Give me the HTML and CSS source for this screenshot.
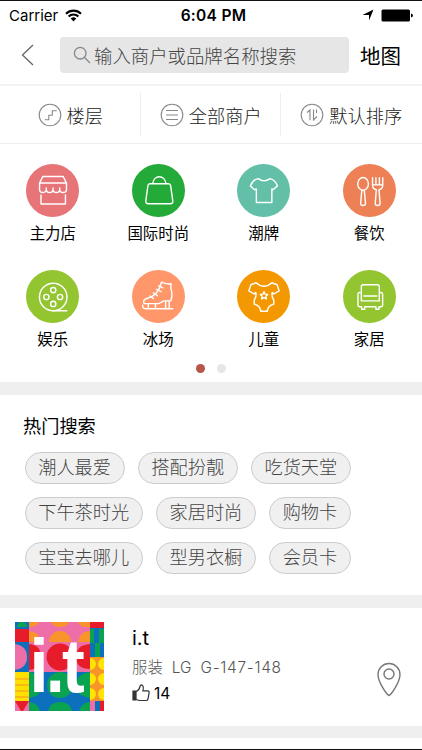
FILE: index.html
```html
<!DOCTYPE html>
<html lang="zh-CN">
<head>
    <meta charset="UTF-8">
    <meta name="viewport" content="width=device-width, initial-scale=1.0">
    <title>商户</title>
    <link rel="stylesheet" href="styles.css">
</head>
<body>
<div class="screen">

    <!-- 状态栏 -->
    <div class="status-bar">
        <div class="carrier">
            <span>Carrier</span>
            <svg width="17" height="13" viewBox="0 0 17 13" fill="none" stroke="#000" stroke-width="2.1">
                <path d="M1 4.7a10.6 10.6 0 0 1 15 0M3.6 7.5a7 7 0 0 1 9.8 0"/>
                <path d="M8.5 12.5L5.7 9.6a4 4 0 0 1 5.6 0z" fill="#000" stroke="none"/>
            </svg>
        </div>
        <strong class="clock">6:04 PM</strong>
        <div class="battery">
            <svg width="12" height="12" viewBox="0 0 12 12"><path d="M11.5 .5L7 11.5V6H.5z"/></svg>
            <svg width="33" height="13" viewBox="0 0 33 13">
                <rect x=".5" y=".5" width="28.5" height="12" rx="1.5"/>
                <path d="M30 4.5q2 .3 2 2t-2 2z"/>
            </svg>
        </div>
    </div>

    <!-- 搜索 -->
    <div class="header">
        <svg class="back" width="13" height="22" viewBox="0 0 13 22"><path d="M12 1L1.5 11L12 21"/></svg>
        <div class="search">
            <svg width="18" height="18" viewBox="0 0 18 18"><circle cx="7.2" cy="7.2" r="5.8"/><path d="M11.5 11.5L17 17"/></svg>
            <span>输入商户或品牌名称搜索</span>
        </div>
        <span class="map">地图</span>
    </div>

    <!-- 筛选 -->
    <div class="filters">
        <div class="filter">
            <svg width="24" height="24" viewBox="0 0 24 24"><circle cx="12" cy="12" r="10.8"/><path d="M6.8 16.8h4v-4.6h3.5V7.8h4.5"/></svg>
            <span>楼层</span>
        </div>
        <div class="filter">
            <svg width="24" height="24" viewBox="0 0 24 24"><circle cx="12" cy="12" r="10.8"/><path d="M6 7.5h12M6 12h12M6 16.5h12"/></svg>
            <span>全部商户</span>
        </div>
        <div class="filter">
            <svg width="24" height="24" viewBox="0 0 24 24"><circle cx="12" cy="12" r="10.8"/><path d="M7 9.5L10 7v10.3M13.5 6.5V17l3.5-3.5M16.5 6.5V10"/></svg>
            <span>默认排序</span>
        </div>
    </div>

    <!-- 分类 -->
    <div class="categories">
        <div class="category">
            <svg class="icon red" viewBox="0 0 52 52">
                <path d="M16.5 12.3h20l3.2 6.4H13.3zM13.3 18.7v6.2c0 4 6.6 4 6.6 0c0 4 6.6 4 6.6 0c0 4 6.6 4 6.6 0c0 4 6.6 4 6.6 0v-6.2M19.9 23.5v2M26.5 23.5v2M33.1 23.5v2M14.7 30.5v8.7h24v-8.7"/>
            </svg>
            <span>主力店</span>
        </div>
        <div class="category">
            <svg class="icon green" viewBox="0 0 52 52">
                <path d="M17.5 19.3h18.2q1.9 0 2.2 2L40 36q.4 3-2.4 3H16q-2.8 0-2.4-3l2-14.7q.3-2 1.9-2zM20.3 19.3c1-9 12-9 13 0"/>
            </svg>
            <span>国际时尚</span>
        </div>
        <div class="category">
            <svg class="icon teal" viewBox="0 0 52 52">
                <path d="M20.8 14.3q5.8 4.5 11.6 0c4 1 5.5 2.6 7.3 7.2l-4.4 3.7-1.1-.7v13.2H19V24.5l-1.8.7-4.1-3.7c1.8-4.6 3.8-6.4 7.7-7.2z"/>
            </svg>
            <span>潮牌</span>
        </div>
        <div class="category">
            <svg class="icon orange" viewBox="0 0 52 52">
                <ellipse cx="19.7" cy="19.5" rx="5.2" ry="6.3"/>
                <path d="M18.5 25.8l-1.2 12.7q0 2.3 2.4 2.3t2.4-2.3l-1.2-12.7M29 13.5v7.2q0 4 3.7 4.6l-1.1 13.2q0 2.3 2.4 2.3t2.4-2.3L35.3 25.3q3.7-.6 3.7-4.6v-7.2M32.3 13.5v7M35.7 13.5v7M29 20.5h10"/>
            </svg>
            <span>餐饮</span>
        </div>
        <div class="category">
            <svg class="icon lime" viewBox="0 0 52 52">
                <circle cx="26.7" cy="26.5" r="13.5"/>
                <circle cx="26.7" cy="19.7" r="2.6"/><circle cx="26.7" cy="33.3" r="2.6"/>
                <circle cx="20" cy="26.5" r="2.6"/><circle cx="33.4" cy="26.5" r="2.6"/>
                <path d="M26.7 40H40"/>
            </svg>
            <span>娱乐</span>
        </div>
        <div class="category">
            <svg class="icon salmon" viewBox="0 0 52 52">
                <path d="M29 12q4.5 2.2 9.3 1.5-1 4 .8 8.5.5 4-1 8.3h-6.6L26 33H12q-2-3.5 2.5-5Q25.5 25.5 29 12zM10.5 34.5q-.5 3.5 3 3.5H40M16 33v5M23 33v5M33 30.5V38M36.5 30.5V38"/>
                <path d="M26.2 15.5l4 2M24 19l4.5 2.3M21 22.5l4 2.8M17.5 25.5l3.5 2.5"/>
            </svg>
            <span>冰场</span>
        </div>
        <div class="category">
            <svg class="icon amber" viewBox="0 0 52 52">
                <path d="M18.8 12.5q7.7 7 15.4 0l5.2 2 2 6-5.2 3-1.6-1.5q-1 4 1.5 7.5v4q-6 1.5-6.3 7h-6.6q-.3-5.5-6.3-7v-4q2.5-3.5 1.5-7.5l-1.6 1.5-5.2-3 2-6z"/>
                <path d="M26.5 21.3l1.1 2.4 2.6.3-1.9 1.8.5 2.6-2.3-1.3-2.3 1.3.5-2.6-1.9-1.8 2.6-.3z"/>
            </svg>
            <span>儿童</span>
        </div>
        <div class="category">
            <svg class="icon lime" viewBox="0 0 52 52">
                <path d="M18 22.5v-6.2q0-1.8 1.8-1.8h14q1.8 0 1.8 1.8v14H18zM18 22.5q-3.3-1.2-3.3 1.5v10.7q0 1.3 1.3 1.3h2.3v2.5h3V36h11v2.5h3V36h2.3q1.3 0 1.3-1.3V24q0-2.7-3.3-1.5M20.5 25.5h12.6"/>
            </svg>
            <span>家居</span>
        </div>
    </div>
    <div class="dots">
        <span class="dot active"></span>
        <span class="dot"></span>
    </div>

    <!-- 热门搜索 -->
    <div class="hot">
        <h2>热门搜索</h2>
        <div class="tags">
            <span class="tag">潮人最爱</span>
            <span class="tag">搭配扮靓</span>
            <span class="tag">吃货天堂</span>
        </div>
        <div class="tags">
            <span class="tag">下午茶时光</span>
            <span class="tag">家居时尚</span>
            <span class="tag">购物卡</span>
        </div>
        <div class="tags">
            <span class="tag">宝宝去哪儿</span>
            <span class="tag">型男衣橱</span>
            <span class="tag">会员卡</span>
        </div>
    </div>

    <!-- 商户 -->
    <div class="shop">
        <svg class="logo" width="89" height="89" viewBox="0 0 89 89">
            <rect width="89" height="89" fill="#0d70bd"/>
            <path d="M2 5a5 5 0 0 1 10 0z" fill="#0aa352"/>
            <rect y="7" width="14" height="13" fill="#e71c2b"/>
            <rect x="14" width="61" height="50" fill="#ee6fa8"/>
            <path d="M36 0h18q-2 5-9 5t-9-5zM63 0h12v5q-10 1-12-5zM14 0h10q-2 5-10 5zM34 20a11 11 0 0 1 22 0zM63 20q2-11 12-11v11zM14 9q11 1 12 11H14z" fill="#f7942a"/>
            <path d="M14 22q12 1 12 13T14 48z" fill="#e71c2b"/>
            <circle cx="45" cy="35" r="13.5" fill="#e71c2b"/>
            <path d="M75 22q-14 1-14 13t14 12z" fill="#e71c2b"/>
            <path d="M0 22q12 2 12 13T0 48z" fill="#ee6fa8"/>
            <rect y="50" width="14" height="29" fill="#ffdf00"/>
            <path d="M0 57h14M0 63h14M0 69h14M0 75h14" stroke="#f7942a" stroke-width="1.2"/>
            <rect y="79" width="14" height="10" fill="#e71c2b"/>
            <path d="M0 79l6 10H0zM14 79L8 89h6z" fill="#ee6fa8"/>
            <path d="M14 50q13 2 13 13T14 76z" fill="#0aa352"/>
            <circle cx="45" cy="63" r="13" fill="#0aa352"/>
            <path d="M75 50q-14 2-14 13t14 13zM14 80q9 1 11 9H14zM33 89q2-9 12-9t12 9zM64 89q3-9 11-9v9z" fill="#0aa352"/>
            <rect x="75" width="14" height="6" fill="#e71c2b"/>
            <path d="M75 7h4v14h-4zM84 7h5v14h-5zM80 21h5v14h-5z" fill="#0aa352"/>
            <rect x="75" y="35" width="14" height="44" fill="#f7942a"/>
            <g fill="#ffe500">
                <path d="M75 36a6 6 0 0 1 0 12zM75 51a6 6 0 0 1 0 12zM75 66a6 6 0 0 1 0 12z"/>
                <path d="M89 36a6 6 0 0 0 0 12zM89 51a6 6 0 0 0 0 12zM89 66a6 6 0 0 0 0 12z"/>
            </g>
            <path d="M75 79h5v10h-5z" fill="#ee6fa8"/>
            <path d="M85 79h4v10h-4z" fill="#e71c2b"/>
            <text class="logo-text" x="16" y="70.5" transform="scale(.9 1)">i.t</text>
        </svg>
        <div class="info">
            <h3>i.t</h3>
            <div class="place"><span>服装</span><span>LG</span><span class="number">G-147-148</span></div>
            <div class="likes">
                <svg width="18" height="18" viewBox="0 0 18 18">
                    <path d="M4 7.5Q7.5 6 8 2.3q.2-1.5 1.5-1.5 2.5.5 1.5 6h4.6q1.8.2 1.5 2l-1.1 6q-.3 1.7-2 1.7H7.5L4 15.5z"/>
                    <path class="cuff" d="M1 7h2.5v9H1z"/>
                </svg>
                <span>14</span>
            </div>
        </div>
        <svg class="pin" width="24" height="35" viewBox="0 0 24 35">
            <path d="M12 33.5C9.5 32.5 1 20 1 12.5a11 11 0 0 1 22 0C23 20 14.5 32.5 12 33.5z"/>
            <circle cx="12" cy="12" r="5"/>
        </svg>
    </div>
</div>
</body>
</html>
```
FILE: styles.css
```css
* {
    box-sizing: border-box;
}
body {
    margin: 0;
    background-color: #fff;
    color: #000;
    font-family: Inter, "Noto Sans CJK SC", sans-serif;
}
h2, h3 {
    margin: 0;
    font-weight: normal;
}
svg {
    display: block;
    flex: none;
}
.screen {
    height: 750px;
    border-top: 1px solid #111;
    border-bottom: 1px solid #111;
    overflow: hidden;
}
.status-bar {
    display: grid;
    grid-template-columns: 1fr auto 1fr;
    align-items: center;
    height: 28px;
    padding: 0 8px 0 9px;
    font-size: 15px;
}
.carrier {
    display: flex;
    align-items: center;
    gap: 7px;
}
.clock {
    padding-left: 4px;
    font-weight: 600;
    font-size: 15.5px;
    letter-spacing: 0.3px;
}
.battery {
    display: flex;
    align-items: center;
    justify-content: flex-end;
    gap: 7px;
}
.header {
    display: flex;
    align-items: center;
    height: 57px;
    padding: 0 20px 4px 21px;
    border-bottom: 2px solid #f2f2f2;
}
.back {
    margin-right: 26px;
    fill: none;
    stroke: #666;
    stroke-width: 1.3;
}
.search {
    display: flex;
    align-items: center;
    gap: 3px;
    width: 289px;
    height: 36px;
    padding-left: 13px;
    border-radius: 4px;
    background-color: #e6e6e6;
    color: #444;
    font-weight: 300;
    font-size: 18.4px;
    white-space: nowrap;
}
.search svg {
    fill: none;
    stroke: #888;
    stroke-width: 1.3;
}
.map {
    margin-left: 11px;
    font-size: 20.5px;
    white-space: nowrap;
}
.filters {
    display: grid;
    grid-template-columns: repeat(3, 140.5px);
    height: 58px;
    padding: 7px 0;
    border-bottom: 1px solid #eee;
}
.filter {
    display: flex;
    align-items: center;
    justify-content: center;
    gap: 5px;
    color: #222;
    font-weight: 300;
    font-size: 18.2px;
}
.filter + .filter {
    margin-left: -1px;
    border-left: 1px solid #eee;
}
.filter svg {
    fill: none;
    stroke: #888;
    stroke-width: 1.1;
}
.categories {
    display: grid;
    grid-template-columns: repeat(4, 1fr);
    grid-auto-rows: 105.5px;
    height: 211px;
    padding-top: 20px;
}
.category {
    display: flex;
    flex-direction: column;
    align-items: center;
    font-size: 15.4px;
    line-height: 22px;
}
.icon {
    width: 53px;
    height: 53px;
    margin-bottom: 6px;
    border-radius: 50%;
    fill: none;
    stroke: #fff;
    stroke-width: 1.4;
    stroke-linejoin: round;
    stroke-linecap: round;
}
.red {
    background-color: #e77477;
}
.green {
    background-color: #24aa38;
}
.teal {
    background-color: #63bfa8;
}
.orange {
    background-color: #ee8055;
}
.lime {
    background-color: #92c530;
}
.salmon {
    background-color: #ff976a;
}
.amber {
    background-color: #f39800;
}
.dots {
    display: flex;
    justify-content: center;
    align-items: center;
    gap: 12px;
    height: 26.5px;
}
.dot {
    width: 9px;
    height: 9px;
    border-radius: 50%;
    background-color: #e6e6e6;
}
.dot.active {
    background-color: #b7554b;
}
.hot {
    height: 226px;
    padding: 18px 23px 0;
    border-top: 13px solid #efefef;
    border-bottom: 13px solid #efefef;
}
.hot h2 {
    margin-bottom: 12.5px;
    font-size: 18.2px;
    line-height: 27px;
}
.tags {
    display: flex;
    gap: 13px;
    margin: 0 0 13.5px 2px;
}
.tag {
    height: 31.5px;
    padding: 0 13.2px 0 12.2px;
    border: 1px solid #ccc;
    border-radius: 16px;
    background-color: #f0f0f0;
    color: #444;
    font-weight: 300;
    font-size: 18.2px;
    line-height: 29px;
    white-space: nowrap;
}
.shop {
    display: flex;
    height: 130px;
    padding: 14px 21px 0 15px;
    border-bottom: 12px solid #efefef;
}
.logo-text {
    fill: #fff;
    font: bold 76px "Liberation Sans", sans-serif;
    letter-spacing: -3px;
}
.info {
    flex: 1;
    margin-left: 28px;
}
.info h3 {
    font-size: 20px;
    line-height: 33px;
}
.place {
    display: flex;
    gap: 9px;
    color: #555;
    font-weight: 300;
    font-size: 15.4px;
    line-height: 25px;
}
.number {
    letter-spacing: 0.7px;
}
.likes {
    display: flex;
    align-items: center;
    gap: 4px;
    font-size: 15.5px;
    line-height: 27px;
}
.likes svg {
    fill: none;
    stroke: #333;
    stroke-width: 1.2;
}
.likes .cuff {
    fill: #333;
}
.pin {
    margin-top: 40px;
    fill: none;
    stroke: #777;
    stroke-width: 1.4;
}
```
